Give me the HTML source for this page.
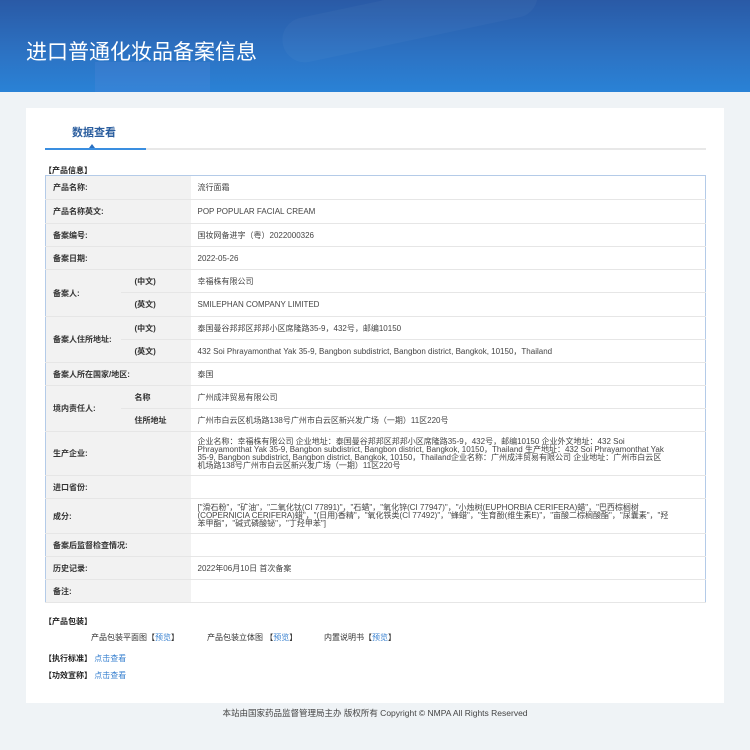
<!DOCTYPE html>
<html><head><meta charset="utf-8"><style>
*{margin:0;padding:0;box-sizing:border-box}
body{width:750px;height:750px;background:#eff3f6;font-family:"Liberation Sans","Noto Sans CJK SC",sans-serif;position:relative;overflow:hidden;color:#333}
.hd{position:absolute;left:0;top:0;width:750px;height:92px;background:linear-gradient(180deg,#2a5aa6 0%,#2c73c4 60%,#2a82d6 100%);overflow:hidden}
.hd .b1{position:absolute;left:280px;top:-5px;width:260px;height:45px;border-radius:25px;background:rgba(255,255,255,.03);transform:rotate(-12deg)}
.hd .b2{position:absolute;left:95px;top:62px;width:115px;height:40px;background:rgba(120,150,230,.15)}
.hd h1{position:absolute;left:26px;top:36px;font-size:21px;font-weight:normal;color:#fff;letter-spacing:0}
.card{position:absolute;left:26px;top:108px;width:698px;height:595px;background:#fff}
.tab{position:absolute;left:72px;top:124px;font-size:11px;color:#2a5d9e;font-weight:bold}
.tl{position:absolute;left:45px;top:148px;width:661px;height:2px;background:#e8e8e8}
.tl2{position:absolute;left:45px;top:148px;width:101px;height:2px;background:#3a8ee0}
.tri{position:absolute;left:89px;top:144px;border-left:3px solid transparent;border-right:3px solid transparent;border-bottom:4px solid #2a6fc0}
.sec{position:absolute;font-size:8px;font-weight:bold;color:#222}
table{position:absolute;left:45px;top:175px;width:661px;border-collapse:collapse;border:1px solid #b4cbe8;font-size:8px}
td{border-bottom:1px solid #e6e6e6;padding:0 7px;vertical-align:middle;color:#444}
td.l{background:#f2f2f2;font-weight:bold;color:#333}
td.s{background:#f2f2f2;font-weight:bold;color:#333;padding-left:14px}
td.v{line-height:8px;padding-right:36px}
.lnk{color:#3a82d0}
.p{position:absolute;font-size:8px;color:#333}
.ft{position:absolute;top:707px;left:0;width:750px;text-align:center;font-size:8.5px;color:#444}
</style></head><body>
<div class="hd"><div class="b1"></div><div class="b2"></div><h1>进口普通化妆品备案信息</h1></div>
<div class="card"></div>
<div class="tab">数据查看</div>
<div class="tl"></div><div class="tl2"></div><div class="tri"></div>
<div class="sec" style="left:44px;top:165px">【产品信息】</div>
<table>
<colgroup><col style="width:75px"><col style="width:70px"><col></colgroup>
<tr style="height:24px"><td class="l" colspan="2">产品名称:</td><td>流行面霜</td></tr>
<tr style="height:24px"><td class="l" colspan="2">产品名称英文:</td><td>POP POPULAR FACIAL CREAM</td></tr>
<tr style="height:23px"><td class="l" colspan="2">备案编号:</td><td>国妆网备进字（粤）2022000326</td></tr>
<tr style="height:23px"><td class="l" colspan="2">备案日期:</td><td>2022-05-26</td></tr>
<tr style="height:23px"><td class="l" rowspan="2">备案人:</td><td class="s">(中文)</td><td>幸福株有限公司</td></tr>
<tr style="height:24px"><td class="s">(英文)</td><td>SMILEPHAN COMPANY LIMITED</td></tr>
<tr style="height:23px"><td class="l" rowspan="2">备案人住所地址:</td><td class="s">(中文)</td><td>泰国曼谷邦邦区邦邦小区席隆路35-9，432号，邮编10150</td></tr>
<tr style="height:23px"><td class="s">(英文)</td><td>432 Soi Phrayamonthat Yak 35-9, Bangbon subdistrict, Bangbon district, Bangkok, 10150，Thailand</td></tr>
<tr style="height:23px"><td class="l" colspan="2">备案人所在国家/地区:</td><td>泰国</td></tr>
<tr style="height:23px"><td class="l" rowspan="2">境内责任人:</td><td class="s">名称</td><td>广州成沣贸易有限公司</td></tr>
<tr style="height:23px"><td class="s">住所地址</td><td>广州市白云区机场路138号广州市白云区新兴发广场（一期）11区220号</td></tr>
<tr style="height:44px"><td class="l" colspan="2">生产企业:</td><td class="v">企业名称：幸福株有限公司 企业地址：泰国曼谷邦邦区邦邦小区席隆路35-9，432号，邮编10150 企业外文地址：432 Soi Phrayamonthat Yak 35-9, Bangbon subdistrict, Bangbon district, Bangkok, 10150，Thailand 生产地址：432 Soi Phrayamonthat Yak 35-9, Bangbon subdistrict, Bangbon district, Bangkok, 10150，Thailand企业名称：广州成沣贸易有限公司 企业地址：广州市白云区机场路138号广州市白云区新兴发广场（一期）11区220号</td></tr>
<tr style="height:23px"><td class="l" colspan="2">进口省份:</td><td></td></tr>
<tr style="height:35px"><td class="l" colspan="2">成分:</td><td class="v">["滑石粉"，"矿油"，"二氧化钛(CI 77891)"，"石蜡"，"氧化锌(CI 77947)"，"小烛树(EUPHORBIA CERIFERA)蜡"，"巴西棕榈树(COPERNICIA CERIFERA)蜡"，"(日用)香精"，"氧化铁类(CI 77492)"，"蜂蜡"，"生育酚(维生素E)"，"亩酸二棕榈酸酯"，"尿囊素"，"羟苯甲酯"，"碱式磷酸铋"，"丁羟甲苯"]</td></tr>
<tr style="height:23px"><td class="l" colspan="2">备案后监督检查情况:</td><td></td></tr>
<tr style="height:23px"><td class="l" colspan="2">历史记录:</td><td>2022年06月10日 首次备案</td></tr>
<tr style="height:23px"><td class="l" colspan="2">备注:</td><td></td></tr>
</table>
<div class="sec" style="left:44px;top:616px">【产品包装】</div>
<div class="p" style="left:91px;top:632px">产品包装平面图【<span class="lnk">预览</span>】</div>
<div class="p" style="left:207px;top:632px">产品包装立体图 【<span class="lnk">预览</span>】</div>
<div class="p" style="left:324px;top:632px">内置说明书【<span class="lnk">预览</span>】</div>
<div class="sec" style="left:44px;top:653px">【执行标准】 <span class="lnk" style="font-weight:normal">点击查看</span></div>
<div class="sec" style="left:44px;top:670px">【功效宣称】 <span class="lnk" style="font-weight:normal">点击查看</span></div>
<div class="ft" style="left:0">本站由国家药品监督管理局主办 版权所有 Copyright © NMPA All Rights Reserved</div>
</body></html>
